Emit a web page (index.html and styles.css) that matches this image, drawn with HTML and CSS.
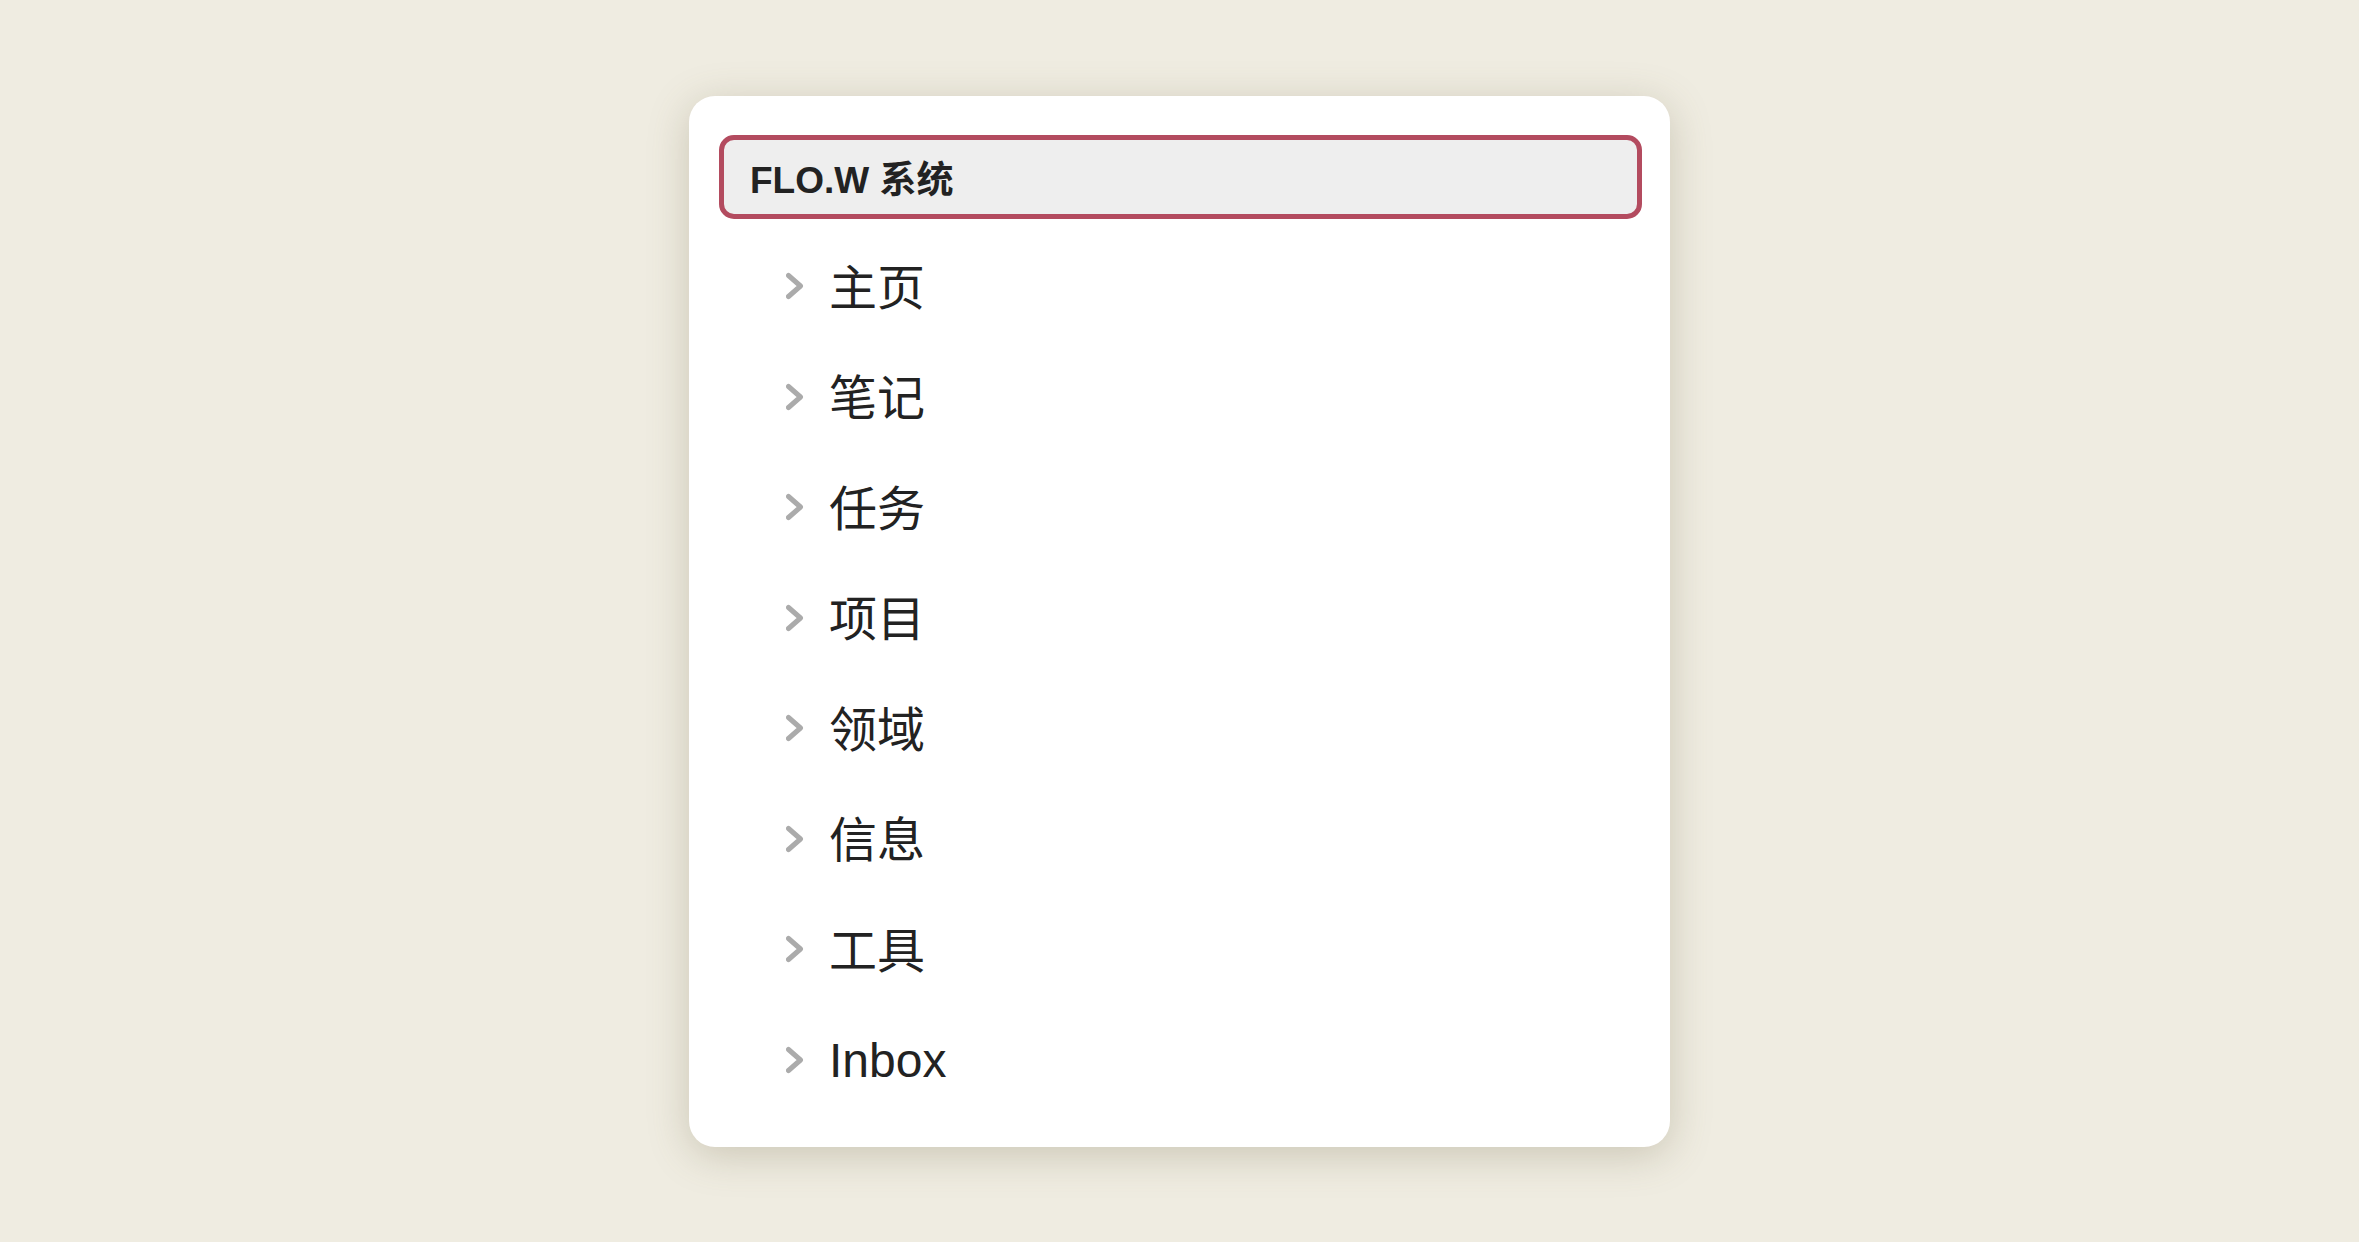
FILE: index.html
```html
<!DOCTYPE html>
<html>
<head lang="zh">
  <meta charset="UTF-8">
  <title>FLO.W 系统</title>
  <link rel="stylesheet" href="styles.css">
</head>
<body>
  <div class="panel">
    <div class="title">FLO.W 系统</div>
    <ul class="menu">
      <li><svg class="arrow" viewBox="0 0 18 28"><polyline points="2.5,3.5 14.5,14 2.5,24.5"/></svg><span>主页</span></li>
      <li><svg class="arrow" viewBox="0 0 18 28"><polyline points="2.5,3.5 14.5,14 2.5,24.5"/></svg><span>笔记</span></li>
      <li><svg class="arrow" viewBox="0 0 18 28"><polyline points="2.5,3.5 14.5,14 2.5,24.5"/></svg><span>任务</span></li>
      <li><svg class="arrow" viewBox="0 0 18 28"><polyline points="2.5,3.5 14.5,14 2.5,24.5"/></svg><span>项目</span></li>
      <li><svg class="arrow" viewBox="0 0 18 28"><polyline points="2.5,3.5 14.5,14 2.5,24.5"/></svg><span>领域</span></li>
      <li><svg class="arrow" viewBox="0 0 18 28"><polyline points="2.5,3.5 14.5,14 2.5,24.5"/></svg><span>信息</span></li>
      <li><svg class="arrow" viewBox="0 0 18 28"><polyline points="2.5,3.5 14.5,14 2.5,24.5"/></svg><span>工具</span></li>
      <li><svg class="arrow" viewBox="0 0 18 28"><polyline points="2.5,3.5 14.5,14 2.5,24.5"/></svg><span class="latin">Inbox</span></li>
    </ul>
  </div>
</body>
</html>
```

FILE: styles.css
```css
* {
  margin: 0;
  padding: 0;
  box-sizing: border-box;
}
ul {
  list-style: none;
}
html,
body {
  min-height: 100%;
}
body {
  background-color: #efece1;
  font-family: "Liberation Sans", "Noto Sans CJK SC", sans-serif;
  color: #222;
  padding: 96px 0 96px;
}
.panel {
  width: 981px;
  margin: 0 auto;
  padding: 39px 28px 32px 30px;
  background-color: #fff;
  border-radius: 26px;
  box-shadow: 0 8px 40px rgba(110, 100, 70, 0.28);
}
.title {
  height: 84px;
  border: 5px solid #b34b5f;
  border-radius: 15px;
  background-color: #eee;
  padding-left: 26px;
  display: flex;
  align-items: center;
  font-size: 37px;
  font-weight: bold;
  color: #222;
}
.menu {
  margin-top: 12px;
}
.menu li {
  height: 110.5px;
  display: flex;
  align-items: center;
  padding-left: 67px;
  padding-bottom: 5px;
  font-size: 48px;
}
.menu .latin {
  position: relative;
  top: 3px;
}
.menu .arrow {
  width: 18px;
  height: 28px;
  margin: 5px 25px 0 0;
  flex-shrink: 0;
}
.menu .arrow polyline {
  fill: none;
  stroke: #ababab;
  stroke-width: 5;
  stroke-linecap: round;
  stroke-linejoin: round;
}
```
